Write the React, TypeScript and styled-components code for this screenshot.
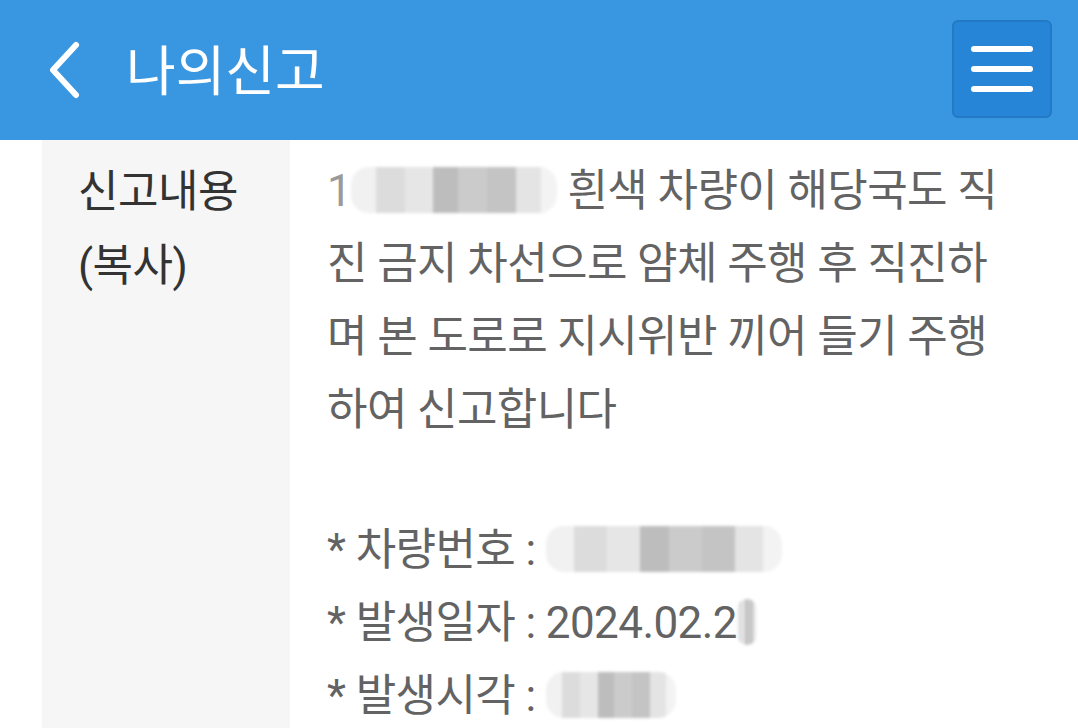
import React from 'react';
import styled, { createGlobalStyle } from 'styled-components';

const GlobalStyle = createGlobalStyle`
  html, body {
    margin: 0;
    padding: 0;
    background: #fff;
    font-family: Roboto, "Noto Sans CJK KR", sans-serif;
    overflow: hidden;
  }
`;

const Page = styled.div`
  width: 1078px;
  height: 728px;
  display: flex;
  flex-direction: column;
  overflow: hidden;
`;

const Header = styled.header`
  height: 140px;
  flex-shrink: 0;
  background: #3996e0;
  display: flex;
  align-items: center;
  padding: 0 26px 0 44px;
  box-sizing: border-box;
`;

const BackButton = styled.button`
  background: none;
  border: 0;
  padding: 0;
  width: 40px;
  height: 60px;
  display: flex;
  align-items: center;
  justify-content: center;
  cursor: pointer;
`;

const Title = styled.h1`
  margin: 0 0 6px 42px;
  flex: 1;
  color: #fff;
  font-family: "Noto Sans CJK KR", sans-serif;
  font-size: 54px;
  font-weight: 400;
  letter-spacing: 0;
`;

const MenuButton = styled.button`
  width: 100px;
  height: 98px;
  margin-top: -2px;
  border-radius: 6px;
  border: 2px solid #2379c4;
  background: #2685d6;
  display: flex;
  flex-direction: column;
  align-items: center;
  justify-content: center;
  gap: 14px;
  padding: 0;
  box-sizing: border-box;
`;

const MenuLine = styled.span`
  display: block;
  width: 62px;
  height: 6px;
  border-radius: 3px;
  background: #fff;
`;

const Table = styled.div`
  flex: 1;
  margin: 0 42px;
  display: grid;
  grid-template-columns: 248px 1fr;
`;

const LabelCell = styled.div`
  background: #f6f6f6;
  padding: 15px 0 0 36px;
  color: #333;
  font-size: 44px;
  line-height: 74px;
  letter-spacing: -0.5px;
`;

const ValueCell = styled.div`
  padding: 15px 36px 0 37px;
  color: #636363;
  font-size: 44px;
  line-height: 73px;
  letter-spacing: -0.6px;
`;

const Para = styled.p`
  margin: 0;
`;

const Gap = styled.div`
  height: 67px;
`;

const Redacted = styled.span<{ $w: number }>`
  display: inline-block;
  width: ${({ $w }) => $w}px;
  height: 46px;
  vertical-align: -7px;
  border-radius: 18px;
  background: linear-gradient(
    90deg,
    #f1f1f1 0 12%,
    #dcdcdc 12% 26%,
    #e6e6e6 26% 40%,
    #bdbdbd 40% 52%,
    #cbcbcb 52% 66%,
    #c4c4c4 66% 80%,
    #e4e4e4 80% 92%,
    #f3f3f3 92% 100%
  );
  filter: blur(1.5px);
`;

const Faint = styled.span`
  color: #9a9a9a;
`;

const App: React.FC = () => {
  return (
    <>
      <GlobalStyle />
      <Page>
        <Header>
          <BackButton aria-label="뒤로">
            <svg width="34" height="58" viewBox="0 0 34 58">
              <path
                d="M29 4 L6 29 L29 54"
                fill="none"
                stroke="#fff"
                strokeWidth="6"
                strokeLinecap="round"
                strokeLinejoin="round"
              />
            </svg>
          </BackButton>
          <Title>나의신고</Title>
          <MenuButton aria-label="메뉴">
            <MenuLine />
            <MenuLine />
            <MenuLine />
          </MenuButton>
        </Header>
        <Table>
          <LabelCell>
            신고내용
            <br />
            (복사)
          </LabelCell>
          <ValueCell>
            <Para>
              <Faint>1</Faint>
              <Redacted $w={206} /> 흰색 차량이 해당국도 직진 금지 차선으로 얌체 주행 후
              직진하며 본 도로로 지시위반 끼어 들기 주행하여 신고합니다
            </Para>
            <Gap />
            <Para>
              * 차량번호 : <Redacted $w={236} />
            </Para>
            <Para>
              * 발생일자 : 2024.02.2<Redacted $w={20} />
            </Para>
            <Para>
              * 발생시각 : <Redacted $w={130} />
            </Para>
          </ValueCell>
        </Table>
      </Page>
    </>
  );
};

export default App;
